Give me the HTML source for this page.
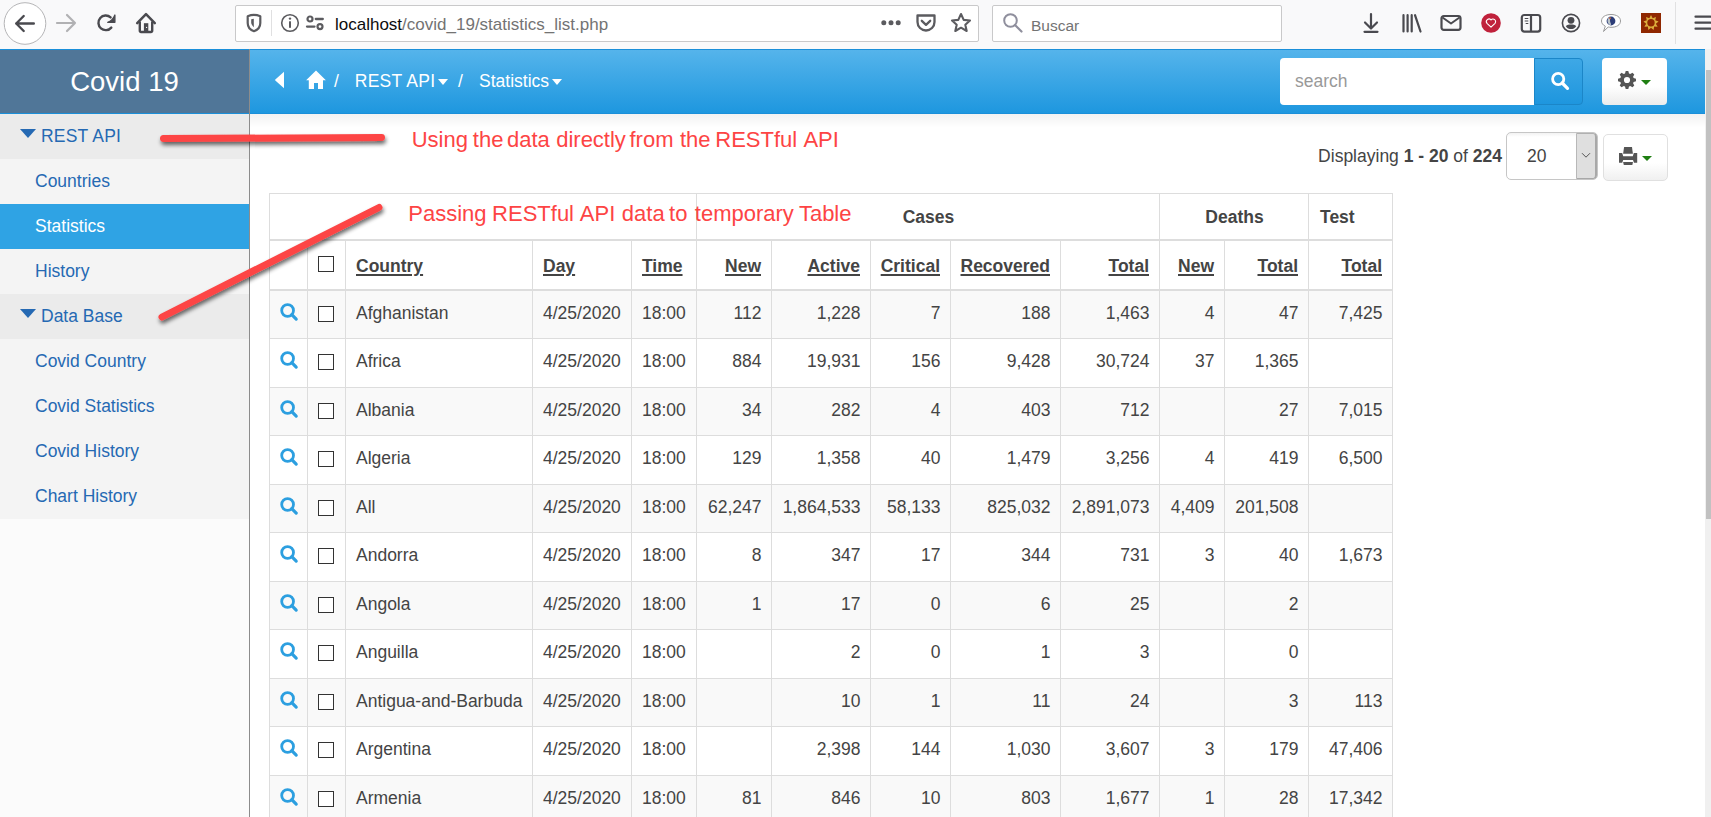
<!DOCTYPE html>
<html><head><meta charset="utf-8"><style>
html,body{margin:0;padding:0;width:1711px;height:817px;overflow:hidden;background:#fff;font-family:"Liberation Sans", sans-serif}
.t{position:absolute;white-space:nowrap;font-family:"Liberation Sans", sans-serif}
.b{position:absolute;display:block}
</style></head><body>
<div class="b" style="left:0px;top:0px;width:1711px;height:49px;background:#f9f9fa"></div>
<svg class="b" style="left:3px;top:2px" width="44" height="44" viewBox="0 0 44 44"><circle cx="22" cy="21.5" r="20.8" fill="#fff" stroke="#b5b5b7" stroke-width="1"/><path d="M13.2 21.5H30.8M20.7 14L13.2 21.5L20.7 29" fill="none" stroke="#4a4a4f" stroke-width="2.4" stroke-linecap="round" stroke-linejoin="round"/></svg>
<svg class="b" style="left:54px;top:12px" width="24" height="22" viewBox="0 0 24 22"><path d="M3 11H21M13 3L21 11L13 19" fill="none" stroke="#b1b1b3" stroke-width="2.2" stroke-linecap="round" stroke-linejoin="round"/></svg>
<svg class="b" style="left:95px;top:12px" width="24" height="22" viewBox="0 0 24 22"><path d="M16.3 15.6A7.3 7.3 0 1 1 15.6 5.4" fill="none" stroke="#4a4a4f" stroke-width="2.4" stroke-linecap="round"/><path d="M19.9 3V10.3H12.7Q17.6 8.6 19.9 3Z" fill="#4a4a4f" stroke="#4a4a4f" stroke-width="1.3" stroke-linejoin="round"/></svg>
<svg class="b" style="left:134px;top:11px" width="24" height="24" viewBox="0 0 24 24"><path d="M3.2 12.2L12 3.2L20.8 12.2" fill="none" stroke="#4a4a4f" stroke-width="2.5" stroke-linecap="round" stroke-linejoin="round"/><path d="M5.8 10.5V19.8A1.2 1.2 0 0 0 7 21H17A1.2 1.2 0 0 0 18.2 19.8V10.5" fill="none" stroke="#4a4a4f" stroke-width="2.4" stroke-linejoin="round"/><rect x="9.9" y="12.2" width="4.4" height="8.2" fill="#4a4a4f"/><circle cx="12.6" cy="16.4" r="0.6" fill="#fff"/></svg>
<div class="b" style="left:235px;top:5px;width:742px;height:35px;background:#fff;border:1px solid #c9c9ca;border-radius:2px"></div>
<svg class="b" style="left:245px;top:13px" width="18" height="20" viewBox="0 0 18 20"><path d="M2.7 3.2Q9 0.7 15.3 3.2V10C15.3 13.8 12.5 17 9 18.2C5.5 17 2.7 13.8 2.7 10Z" fill="none" stroke="#5b5b5f" stroke-width="2.2" stroke-linejoin="round"/><path d="M6.2 6.2L8.8 5.8V14.2C7.2 12.5 6.2 11 6.2 9.5Z" fill="#5b5b5f"/></svg>
<div class="b" style="left:271px;top:10px;width:1px;height:26px;background:#e0e0e1"></div>
<svg class="b" style="left:280px;top:13px" width="20" height="20" viewBox="0 0 20 20"><circle cx="10" cy="10" r="8.3" fill="none" stroke="#5b5b5f" stroke-width="1.6"/><rect x="9" y="8.3" width="2" height="6.5" fill="#5b5b5f"/><circle cx="10" cy="5.6" r="1.2" fill="#5b5b5f"/></svg>
<svg class="b" style="left:305px;top:14px" width="20" height="18" viewBox="0 0 20 18"><circle cx="5" cy="5" r="2.5" fill="none" stroke="#5b5b5f" stroke-width="2.2"/><path d="M10.8 5H17.8M2 12.6H9.5" stroke="#5b5b5f" stroke-width="2.3" stroke-linecap="round"/><circle cx="15" cy="12.6" r="2.5" fill="none" stroke="#5b5b5f" stroke-width="2.2"/></svg>
<div class="t" style="left:335px;top:13px;font-size:17px;line-height:24px;color:#0c0c0d">localhost<span style="color:#737373">/covid_19/statistics_list.php</span></div>
<svg class="b" style="left:880px;top:19px" width="22" height="8" viewBox="0 0 22 8"><circle cx="3.8" cy="3.8" r="2.5" fill="#5b5b5f"/><circle cx="11" cy="3.8" r="2.5" fill="#5b5b5f"/><circle cx="18.2" cy="3.8" r="2.5" fill="#5b5b5f"/></svg>
<svg class="b" style="left:915px;top:13px" width="22" height="20" viewBox="0 0 22 20"><path d="M2.5 2.5H19.5V9A8.5 8.5 0 0 1 2.5 9Z" fill="none" stroke="#5b5b5f" stroke-width="2.3" stroke-linejoin="round"/><path d="M6.8 7.8L11 11.8L15.2 7.8" fill="none" stroke="#5b5b5f" stroke-width="2.3" stroke-linecap="round" stroke-linejoin="round"/></svg>
<svg class="b" style="left:950px;top:12px" width="22" height="22" viewBox="0 0 22 22"><path d="M11 2L13.7 7.9L20 8.5L15.3 12.7L16.7 19L11 15.7L5.3 19L6.7 12.7L2 8.5L8.3 7.9Z" fill="none" stroke="#5b5b5f" stroke-width="2.1" stroke-linejoin="round"/></svg>
<div class="b" style="left:992px;top:5px;width:288px;height:35px;background:#fff;border:1px solid #c9c9ca;border-radius:2px"></div>
<svg class="b" style="left:1002px;top:12px" width="22" height="22" viewBox="0 0 22 22"><circle cx="8.5" cy="8.5" r="6.3" fill="none" stroke="#8f8f9d" stroke-width="2"/><path d="M13 13L19.5 19.5" stroke="#8f8f9d" stroke-width="2.2" stroke-linecap="round"/></svg>
<div class="t" style="left:1031px;top:14.5px;font-size:15.5px;line-height:22px;color:#737373">Buscar</div>
<svg class="b" style="left:1361px;top:12px" width="20" height="22" viewBox="0 0 20 22"><path d="M10 2V16M4 10.5L10 16.5L16 10.5" fill="none" stroke="#4a4a4f" stroke-width="2.2" stroke-linecap="round" stroke-linejoin="round"/><path d="M3.5 19.8H16.5" stroke="#4a4a4f" stroke-width="2.2" stroke-linecap="round"/></svg>
<svg class="b" style="left:1400px;top:12px" width="24" height="22" viewBox="0 0 24 22"><path d="M3.5 3.2V19.5M7.6 3.2V19.5M11.7 3.2V19.5M15 3.2L20.5 19.5" fill="none" stroke="#4a4a4f" stroke-width="2.2" stroke-linecap="round"/></svg>
<svg class="b" style="left:1439px;top:13px" width="24" height="20" viewBox="0 0 24 20"><rect x="2.5" y="3" width="19" height="13.8" rx="2.3" fill="none" stroke="#4a4a4f" stroke-width="2.2"/><path d="M3.5 4.5L12 10.5L20.5 4.5" fill="none" stroke="#4a4a4f" stroke-width="2" stroke-linejoin="round"/></svg>
<svg class="b" style="left:1480px;top:12px" width="22" height="22" viewBox="0 0 22 22"><circle cx="11" cy="11" r="9.8" fill="#c0213b"/><path d="M11 15.2L7 11.3A2.3 2.3 0 0 1 11 8A2.3 2.3 0 0 1 15 11.3Z" fill="none" stroke="#fff" stroke-width="1.1" stroke-linejoin="round"/></svg>
<svg class="b" style="left:1519px;top:12px" width="24" height="22" viewBox="0 0 24 22"><rect x="2.8" y="3" width="18.4" height="16.6" rx="2.5" fill="none" stroke="#4a4a4f" stroke-width="2.2"/><path d="M12 3V19.6" stroke="#4a4a4f" stroke-width="2.2"/><path d="M5.7 6.5H9.3M5.7 9H9.3M6.7 11.5H9.3" stroke="#4a4a4f" stroke-width="1.2"/></svg>
<svg class="b" style="left:1560px;top:12px" width="22" height="22" viewBox="0 0 22 22"><circle cx="11" cy="11" r="8.6" fill="none" stroke="#4a4a4f" stroke-width="1.6"/><circle cx="11" cy="8.3" r="3.4" fill="#4a4a4f"/><path d="M5.8 14.2C7 12.8 9 12.6 11 12.6C13 12.6 15 12.8 16.2 14.2C15 16.2 13 17 11 17C9 17 7 16.2 5.8 14.2Z" fill="#4a4a4f"/></svg>
<svg class="b" style="left:1599px;top:12px" width="24" height="22" viewBox="0 0 24 22"><path d="M12 2.5C17.5 2.5 21.5 5 21.5 9C21.5 13 17.5 15.3 12 15.3C11 15.3 10 15.2 9.2 15L4.5 19.5L6.3 14.2C3.8 13 2.5 11 2.5 9C2.5 5 6.5 2.5 12 2.5Z" fill="#fff" stroke="#9a9a9a" stroke-width="1"/><circle cx="12" cy="9" r="4.4" fill="#2d3d78"/><path d="M10.2 5.2C11.5 6.5 10.8 8.5 11.2 10C11.8 11.5 12.5 12.5 11.5 13.4C10 12.8 8.6 11.2 8.5 9C8.6 7.2 9.2 6 10.2 5.2Z" fill="#b9c2c8"/><circle cx="11" cy="6.2" r="1" fill="#c86a40"/></svg>
<svg class="b" style="left:1641px;top:13px" width="20" height="20" viewBox="0 0 20 20"><rect x="0" y="0" width="20" height="20" fill="#8f2700"/><path d="M10.00 2.10 L11.68 5.20 L14.95 3.90 L14.24 7.35 L17.58 8.46 L14.83 10.65 L16.67 13.65 L13.15 13.55 L12.63 17.04 L10.00 14.70 L7.37 17.04 L6.85 13.55 L3.33 13.65 L5.17 10.65 L2.42 8.46 L5.76 7.35 L5.05 3.90 L8.32 5.20Z" fill="#dcae3c"/><circle cx="10" cy="9.8" r="3.7" fill="#8f2700"/></svg>
<div class="b" style="left:1675px;top:2px;width:1px;height:42px;background:#e1e1e2"></div>
<svg class="b" style="left:1693px;top:14px" width="18" height="18" viewBox="0 0 18 18"><path d="M2.5 2.7H17.5M2.5 8.7H17.5M2.5 14.7H17.5" stroke="#4a4a4f" stroke-width="2.2" stroke-linecap="round"/></svg>
<div class="b" style="left:0px;top:49px;width:1705px;height:1px;background:#1a8fd9"></div>
<div class="b" style="left:0px;top:113px;width:1705px;height:1px;background:#1a8fd9"></div>
<div class="b" style="left:0px;top:50px;width:249px;height:63px;background:#507698"></div>
<div class="b" style="left:250px;top:50px;width:1455px;height:63px;background:linear-gradient(#55b4eb,#1e97df)"></div>
<div class="b" style="left:250px;top:114px;width:1455px;height:14px;background:linear-gradient(rgba(0,0,0,0.05),rgba(0,0,0,0))"></div>
<div class="t" style="left:4.5px;width:240px;text-align:center;top:64.37px;font-size:27.5px;line-height:36px;color:#fff;font-weight:400;">Covid 19</div>
<svg class="b" style="left:274px;top:71px" width="11" height="18" viewBox="0 0 11 18"><path d="M10 0.8V17.2L0.8 9Z" fill="#fff"/></svg>
<svg class="b" style="left:305px;top:70px" width="22" height="20" viewBox="0 0 22 20"><path d="M11 0.5L1.1 10.3H3.8V19.1H9V13H13V19.1H18V10.3H20.9Z" fill="#fff"/></svg>
<div class="t" style="left:334px;top:70.04px;font-size:17.5px;line-height:23px;color:#fff;font-weight:400;">/</div>
<div class="t" style="left:354.8px;top:70.04px;font-size:17.5px;line-height:23px;color:#fff;font-weight:400;letter-spacing:0.25px">REST API</div>
<svg class="b" style="left:438px;top:79px" width="10" height="6" viewBox="0 0 10 6"><path d="M0 0H10L5 6Z" fill="#fff"/></svg>
<div class="t" style="left:458px;top:70.04px;font-size:17.5px;line-height:23px;color:#fff;font-weight:400;">/</div>
<div class="t" style="left:479px;top:70.04px;font-size:17.5px;line-height:23px;color:#fff;font-weight:400;">Statistics</div>
<svg class="b" style="left:552px;top:79px" width="10" height="6" viewBox="0 0 10 6"><path d="M0 0H10L5 6Z" fill="#fff"/></svg>
<div class="b" style="left:1280px;top:58px;width:254px;height:47px;background:#fff;border-radius:4px 0 0 4px"></div>
<div class="t" style="left:1295px;top:70.04px;font-size:17.5px;line-height:23px;color:#999;font-weight:400;">search</div>
<div class="b" style="left:1534px;top:58px;width:49px;height:47px;background:linear-gradient(#3ea8e6,#1e96de);border:1px solid #1b86c8;box-sizing:border-box;border-radius:0 4px 4px 0"></div>
<svg class="b" style="left:1549.5px;top:70.5px" width="22" height="20" viewBox="0 0 22 20"><circle cx="8.2" cy="8" r="5.6" fill="none" stroke="#fff" stroke-width="2.8"/><path d="M12.2 12L17.5 17.3" stroke="#fff" stroke-width="3.2" stroke-linecap="round"/></svg>
<div class="b" style="left:1602px;top:58px;width:65px;height:47px;background:linear-gradient(#fff 60%,#ececec);border-radius:4px"></div>
<svg class="b" style="left:1618px;top:71px" width="18" height="18" viewBox="0 0 18 18"><path fill-rule="evenodd" d="M7.00 2.40 L7.70 0.00 L10.30 0.00 L11.00 2.40 L12.25 2.92 L14.44 1.72 L16.28 3.56 L15.08 5.75 L15.60 7.00 L18.00 7.70 L18.00 10.30 L15.60 11.00 L15.08 12.25 L16.28 14.44 L14.44 16.28 L12.25 15.08 L11.00 15.60 L10.30 18.00 L7.70 18.00 L7.00 15.60 L5.75 15.08 L3.56 16.28 L1.72 14.44 L2.92 12.25 L2.40 11.00 L0.00 10.30 L0.00 7.70 L2.40 7.00 L2.92 5.75 L1.72 3.56 L3.56 1.72 L5.75 2.92Z M9 5.9A3.1 3.1 0 1 0 9 12.1A3.1 3.1 0 1 0 9 5.9Z" fill="#555"/></svg>
<svg class="b" style="left:1641px;top:80px" width="10" height="5" viewBox="0 0 10 5"><path d="M0 0H10L5 5Z" fill="#1f7f12"/></svg>
<div class="b" style="left:0px;top:114px;width:249px;height:405px;background:#f4f4f4"></div>
<div class="b" style="left:0px;top:519px;width:249px;height:298px;background:#fbfbfb"></div>
<div class="b" style="left:0px;top:114px;width:249px;height:45px;background:#ebebeb"></div>
<div class="b" style="left:0px;top:294px;width:249px;height:45px;background:#ebebeb"></div>
<div class="b" style="left:0px;top:204px;width:249px;height:45px;background:#2fa3e4"></div>
<svg class="b" style="left:20px;top:129px" width="16" height="9" viewBox="0 0 16 9"><path d="M0 0H16L8 9Z" fill="#2569b3"/></svg>
<svg class="b" style="left:20px;top:309px" width="16" height="9" viewBox="0 0 16 9"><path d="M0 0H16L8 9Z" fill="#2569b3"/></svg>
<div class="t" style="left:41px;top:124.84px;font-size:17.5px;line-height:23px;color:#2569b3;font-weight:400;letter-spacing:0.2px">REST API</div>
<div class="t" style="left:41px;top:305.04px;font-size:17.5px;line-height:23px;color:#2569b3;font-weight:400;">Data Base</div>
<div class="t" style="left:35px;top:170.04px;font-size:17.5px;line-height:23px;color:#2569b3;font-weight:400;">Countries</div>
<div class="t" style="left:35px;top:215.04px;font-size:17.5px;line-height:23px;color:#fff;font-weight:400;">Statistics</div>
<div class="t" style="left:35px;top:260.04px;font-size:17.5px;line-height:23px;color:#2569b3;font-weight:400;">History</div>
<div class="t" style="left:35px;top:350.04px;font-size:17.5px;line-height:23px;color:#2569b3;font-weight:400;">Covid Country</div>
<div class="t" style="left:35px;top:395.04px;font-size:17.5px;line-height:23px;color:#2569b3;font-weight:400;">Covid Statistics</div>
<div class="t" style="left:35px;top:440.04px;font-size:17.5px;line-height:23px;color:#2569b3;font-weight:400;">Covid History</div>
<div class="t" style="left:35px;top:485.04px;font-size:17.5px;line-height:23px;color:#2569b3;font-weight:400;">Chart History</div>
<div class="b" style="left:249px;top:49px;width:1px;height:768px;background:#8c8c8c"></div>
<div class="b" style="left:1705px;top:49px;width:6px;height:768px;background:#f0f0f0"></div>
<div class="b" style="left:1706px;top:70px;width:5px;height:449px;background:#c1c1c1"></div>
<div class="t" style="left:1200px;width:302px;text-align:right;top:144.8px;font-size:17.5px;line-height:23px;color:#444444">Displaying <b>1 - 20</b> of <b>224</b></div>
<div class="b" style="left:1506px;top:132px;width:92px;height:48px;background:linear-gradient(#f2f2f2,#fff 4px);border:1px solid #c6c6c6;border-radius:5px;box-sizing:border-box"></div>
<div class="b" style="left:1576px;top:133px;width:21px;height:46px;background:#dfdfdf;border-left:1px solid #b8b8b8;border-right:2px solid #a8a8a8;border-bottom:1px solid #a8a8a8;border-top:1px solid #b0b0b0;box-sizing:border-box;border-radius:0 4px 4px 0"></div>
<div class="t" style="left:1527px;top:144.94px;font-size:17.5px;line-height:23px;color:#444444;font-weight:400;">20</div>
<svg class="b" style="left:1581px;top:152px" width="10" height="7" viewBox="0 0 10 7"><path d="M1 1.2L5 5.2L9 1.2" fill="none" stroke="#555" stroke-width="1"/></svg>
<div class="b" style="left:1603px;top:134px;width:65px;height:47px;background:linear-gradient(#fff 62%,#f0f0f0);border:1px solid #e0e0e0;border-radius:5px;box-sizing:border-box"></div>
<svg class="b" style="left:1619px;top:147px" width="19" height="18" viewBox="0 0 19 18"><path d="M5.1 0H13L13.9 6.8H4.1Z" fill="#555"/><path d="M0 6H3.2L4.2 9.2H13.8L14.8 6H18.2V15.8H15L14 13H4.2L3.2 15.8H0Z" fill="#555"/><path d="M4.1 15H14L13.3 18H4.8Z" fill="#555"/></svg>
<svg class="b" style="left:1642px;top:156px" width="10" height="5" viewBox="0 0 10 5"><path d="M0 0H10L5 5Z" fill="#1f7f12"/></svg>
<div class="b" style="left:269px;top:291px;width:1123px;height:47px;background:#f9f9f9"></div>
<div class="b" style="left:269px;top:388px;width:1123px;height:47px;background:#f9f9f9"></div>
<div class="b" style="left:269px;top:485px;width:1123px;height:47px;background:#f9f9f9"></div>
<div class="b" style="left:269px;top:582px;width:1123px;height:47px;background:#f9f9f9"></div>
<div class="b" style="left:269px;top:679px;width:1123px;height:47px;background:#f9f9f9"></div>
<div class="b" style="left:269px;top:776px;width:1123px;height:48px;background:#f9f9f9"></div>
<div class="b" style="left:269px;top:193px;width:1124px;height:1px;background:#dddddd"></div>
<div class="b" style="left:269px;top:239px;width:1124px;height:2px;background:#dddddd"></div>
<div class="b" style="left:269px;top:289px;width:1124px;height:2px;background:#dddddd"></div>
<div class="b" style="left:269px;top:338px;width:1124px;height:1px;background:#dddddd"></div>
<div class="b" style="left:269px;top:387px;width:1124px;height:1px;background:#dddddd"></div>
<div class="b" style="left:269px;top:435px;width:1124px;height:1px;background:#dddddd"></div>
<div class="b" style="left:269px;top:484px;width:1124px;height:1px;background:#dddddd"></div>
<div class="b" style="left:269px;top:532px;width:1124px;height:1px;background:#dddddd"></div>
<div class="b" style="left:269px;top:581px;width:1124px;height:1px;background:#dddddd"></div>
<div class="b" style="left:269px;top:629px;width:1124px;height:1px;background:#dddddd"></div>
<div class="b" style="left:269px;top:678px;width:1124px;height:1px;background:#dddddd"></div>
<div class="b" style="left:269px;top:726px;width:1124px;height:1px;background:#dddddd"></div>
<div class="b" style="left:269px;top:775px;width:1124px;height:1px;background:#dddddd"></div>
<div class="b" style="left:269px;top:824px;width:1124px;height:1px;background:#dddddd"></div>
<div class="b" style="left:269px;top:193px;width:1px;height:624px;background:#dddddd"></div>
<div class="b" style="left:696px;top:193px;width:1px;height:624px;background:#dddddd"></div>
<div class="b" style="left:1159px;top:193px;width:1px;height:624px;background:#dddddd"></div>
<div class="b" style="left:1308px;top:193px;width:1px;height:624px;background:#dddddd"></div>
<div class="b" style="left:1392px;top:193px;width:1px;height:624px;background:#dddddd"></div>
<div class="b" style="left:307px;top:241px;width:1px;height:576px;background:#dddddd"></div>
<div class="b" style="left:345px;top:241px;width:1px;height:576px;background:#dddddd"></div>
<div class="b" style="left:532px;top:241px;width:1px;height:576px;background:#dddddd"></div>
<div class="b" style="left:631px;top:241px;width:1px;height:576px;background:#dddddd"></div>
<div class="b" style="left:771px;top:241px;width:1px;height:576px;background:#dddddd"></div>
<div class="b" style="left:870px;top:241px;width:1px;height:576px;background:#dddddd"></div>
<div class="b" style="left:950px;top:241px;width:1px;height:576px;background:#dddddd"></div>
<div class="b" style="left:1060px;top:241px;width:1px;height:576px;background:#dddddd"></div>
<div class="b" style="left:1224px;top:241px;width:1px;height:576px;background:#dddddd"></div>
<div class="t" style="left:828.5px;width:200px;text-align:center;top:206.24px;font-size:17.5px;line-height:23px;color:#444444;font-weight:700;">Cases</div>
<div class="t" style="left:1164.5px;width:140px;text-align:center;top:206.24px;font-size:17.5px;line-height:23px;color:#444444;font-weight:700;">Deaths</div>
<div class="t" style="left:1320px;top:206.24px;font-size:17.5px;line-height:23px;color:#444444;font-weight:700;">Test</div>
<div class="b" style="left:318px;top:256px;width:16px;height:16px;border:1.3px solid #333;box-sizing:border-box;background:#fff"></div>
<div class="t" style="left:356px;top:255.34px;font-size:17.5px;line-height:23px;color:#444444;font-weight:700;text-decoration:underline;text-decoration-thickness:1.5px;text-underline-offset:2px">Country</div>
<div class="t" style="left:543px;top:255.34px;font-size:17.5px;line-height:23px;color:#444444;font-weight:700;text-decoration:underline;text-decoration-thickness:1.5px;text-underline-offset:2px">Day</div>
<div class="t" style="left:642px;top:255.34px;font-size:17.5px;line-height:23px;color:#444444;font-weight:700;text-decoration:underline;text-decoration-thickness:1.5px;text-underline-offset:2px">Time</div>
<div class="t" style="left:611px;width:150px;text-align:right;top:255.34px;font-size:17.5px;line-height:23px;color:#444444;font-weight:700;text-decoration:underline;text-decoration-thickness:1.5px;text-underline-offset:2px">New</div>
<div class="t" style="left:710px;width:150px;text-align:right;top:255.34px;font-size:17.5px;line-height:23px;color:#444444;font-weight:700;text-decoration:underline;text-decoration-thickness:1.5px;text-underline-offset:2px">Active</div>
<div class="t" style="left:790px;width:150px;text-align:right;top:255.34px;font-size:17.5px;line-height:23px;color:#444444;font-weight:700;text-decoration:underline;text-decoration-thickness:1.5px;text-underline-offset:2px">Critical</div>
<div class="t" style="left:900px;width:150px;text-align:right;top:255.34px;font-size:17.5px;line-height:23px;color:#444444;font-weight:700;text-decoration:underline;text-decoration-thickness:1.5px;text-underline-offset:2px">Recovered</div>
<div class="t" style="left:999px;width:150px;text-align:right;top:255.34px;font-size:17.5px;line-height:23px;color:#444444;font-weight:700;text-decoration:underline;text-decoration-thickness:1.5px;text-underline-offset:2px">Total</div>
<div class="t" style="left:1064px;width:150px;text-align:right;top:255.34px;font-size:17.5px;line-height:23px;color:#444444;font-weight:700;text-decoration:underline;text-decoration-thickness:1.5px;text-underline-offset:2px">New</div>
<div class="t" style="left:1148px;width:150px;text-align:right;top:255.34px;font-size:17.5px;line-height:23px;color:#444444;font-weight:700;text-decoration:underline;text-decoration-thickness:1.5px;text-underline-offset:2px">Total</div>
<div class="t" style="left:1232px;width:150px;text-align:right;top:255.34px;font-size:17.5px;line-height:23px;color:#444444;font-weight:700;text-decoration:underline;text-decoration-thickness:1.5px;text-underline-offset:2px">Total</div>
<svg class="b" style="left:280px;top:303px" width="19" height="19" viewBox="0 0 19 19"><circle cx="7.6" cy="7.5" r="5.9" fill="none" stroke="#2c9fe0" stroke-width="2.8"/><path d="M11.8 11.7L16.2 16.1" stroke="#2c9fe0" stroke-width="3.2" stroke-linecap="round"/></svg>
<div class="b" style="left:318px;top:306px;width:16px;height:16px;border:1.3px solid #333;box-sizing:border-box;background:#fff"></div>
<div class="t" style="left:356px;top:301.74px;font-size:17.5px;line-height:23px;color:#444444;font-weight:400;">Afghanistan</div>
<div class="t" style="left:543px;top:301.74px;font-size:17.5px;line-height:23px;color:#444444;font-weight:400;">4/25/2020</div>
<div class="t" style="left:642px;top:301.74px;font-size:17.5px;line-height:23px;color:#444444;font-weight:400;">18:00</div>
<div class="t" style="left:611.5px;width:150px;text-align:right;top:301.74px;font-size:17.5px;line-height:23px;color:#444444;font-weight:400;">112</div>
<div class="t" style="left:710.5px;width:150px;text-align:right;top:301.74px;font-size:17.5px;line-height:23px;color:#444444;font-weight:400;">1,228</div>
<div class="t" style="left:790.5px;width:150px;text-align:right;top:301.74px;font-size:17.5px;line-height:23px;color:#444444;font-weight:400;">7</div>
<div class="t" style="left:900.5px;width:150px;text-align:right;top:301.74px;font-size:17.5px;line-height:23px;color:#444444;font-weight:400;">188</div>
<div class="t" style="left:999.5px;width:150px;text-align:right;top:301.74px;font-size:17.5px;line-height:23px;color:#444444;font-weight:400;">1,463</div>
<div class="t" style="left:1064.5px;width:150px;text-align:right;top:301.74px;font-size:17.5px;line-height:23px;color:#444444;font-weight:400;">4</div>
<div class="t" style="left:1148.5px;width:150px;text-align:right;top:301.74px;font-size:17.5px;line-height:23px;color:#444444;font-weight:400;">47</div>
<div class="t" style="left:1232.5px;width:150px;text-align:right;top:301.74px;font-size:17.5px;line-height:23px;color:#444444;font-weight:400;">7,425</div>
<svg class="b" style="left:280px;top:351px" width="19" height="19" viewBox="0 0 19 19"><circle cx="7.6" cy="7.5" r="5.9" fill="none" stroke="#2c9fe0" stroke-width="2.8"/><path d="M11.8 11.7L16.2 16.1" stroke="#2c9fe0" stroke-width="3.2" stroke-linecap="round"/></svg>
<div class="b" style="left:318px;top:354px;width:16px;height:16px;border:1.3px solid #333;box-sizing:border-box;background:#fff"></div>
<div class="t" style="left:356px;top:349.74px;font-size:17.5px;line-height:23px;color:#444444;font-weight:400;">Africa</div>
<div class="t" style="left:543px;top:349.74px;font-size:17.5px;line-height:23px;color:#444444;font-weight:400;">4/25/2020</div>
<div class="t" style="left:642px;top:349.74px;font-size:17.5px;line-height:23px;color:#444444;font-weight:400;">18:00</div>
<div class="t" style="left:611.5px;width:150px;text-align:right;top:349.74px;font-size:17.5px;line-height:23px;color:#444444;font-weight:400;">884</div>
<div class="t" style="left:710.5px;width:150px;text-align:right;top:349.74px;font-size:17.5px;line-height:23px;color:#444444;font-weight:400;">19,931</div>
<div class="t" style="left:790.5px;width:150px;text-align:right;top:349.74px;font-size:17.5px;line-height:23px;color:#444444;font-weight:400;">156</div>
<div class="t" style="left:900.5px;width:150px;text-align:right;top:349.74px;font-size:17.5px;line-height:23px;color:#444444;font-weight:400;">9,428</div>
<div class="t" style="left:999.5px;width:150px;text-align:right;top:349.74px;font-size:17.5px;line-height:23px;color:#444444;font-weight:400;">30,724</div>
<div class="t" style="left:1064.5px;width:150px;text-align:right;top:349.74px;font-size:17.5px;line-height:23px;color:#444444;font-weight:400;">37</div>
<div class="t" style="left:1148.5px;width:150px;text-align:right;top:349.74px;font-size:17.5px;line-height:23px;color:#444444;font-weight:400;">1,365</div>
<svg class="b" style="left:280px;top:400px" width="19" height="19" viewBox="0 0 19 19"><circle cx="7.6" cy="7.5" r="5.9" fill="none" stroke="#2c9fe0" stroke-width="2.8"/><path d="M11.8 11.7L16.2 16.1" stroke="#2c9fe0" stroke-width="3.2" stroke-linecap="round"/></svg>
<div class="b" style="left:318px;top:403px;width:16px;height:16px;border:1.3px solid #333;box-sizing:border-box;background:#fff"></div>
<div class="t" style="left:356px;top:398.74px;font-size:17.5px;line-height:23px;color:#444444;font-weight:400;">Albania</div>
<div class="t" style="left:543px;top:398.74px;font-size:17.5px;line-height:23px;color:#444444;font-weight:400;">4/25/2020</div>
<div class="t" style="left:642px;top:398.74px;font-size:17.5px;line-height:23px;color:#444444;font-weight:400;">18:00</div>
<div class="t" style="left:611.5px;width:150px;text-align:right;top:398.74px;font-size:17.5px;line-height:23px;color:#444444;font-weight:400;">34</div>
<div class="t" style="left:710.5px;width:150px;text-align:right;top:398.74px;font-size:17.5px;line-height:23px;color:#444444;font-weight:400;">282</div>
<div class="t" style="left:790.5px;width:150px;text-align:right;top:398.74px;font-size:17.5px;line-height:23px;color:#444444;font-weight:400;">4</div>
<div class="t" style="left:900.5px;width:150px;text-align:right;top:398.74px;font-size:17.5px;line-height:23px;color:#444444;font-weight:400;">403</div>
<div class="t" style="left:999.5px;width:150px;text-align:right;top:398.74px;font-size:17.5px;line-height:23px;color:#444444;font-weight:400;">712</div>
<div class="t" style="left:1148.5px;width:150px;text-align:right;top:398.74px;font-size:17.5px;line-height:23px;color:#444444;font-weight:400;">27</div>
<div class="t" style="left:1232.5px;width:150px;text-align:right;top:398.74px;font-size:17.5px;line-height:23px;color:#444444;font-weight:400;">7,015</div>
<svg class="b" style="left:280px;top:448px" width="19" height="19" viewBox="0 0 19 19"><circle cx="7.6" cy="7.5" r="5.9" fill="none" stroke="#2c9fe0" stroke-width="2.8"/><path d="M11.8 11.7L16.2 16.1" stroke="#2c9fe0" stroke-width="3.2" stroke-linecap="round"/></svg>
<div class="b" style="left:318px;top:451px;width:16px;height:16px;border:1.3px solid #333;box-sizing:border-box;background:#fff"></div>
<div class="t" style="left:356px;top:446.74px;font-size:17.5px;line-height:23px;color:#444444;font-weight:400;">Algeria</div>
<div class="t" style="left:543px;top:446.74px;font-size:17.5px;line-height:23px;color:#444444;font-weight:400;">4/25/2020</div>
<div class="t" style="left:642px;top:446.74px;font-size:17.5px;line-height:23px;color:#444444;font-weight:400;">18:00</div>
<div class="t" style="left:611.5px;width:150px;text-align:right;top:446.74px;font-size:17.5px;line-height:23px;color:#444444;font-weight:400;">129</div>
<div class="t" style="left:710.5px;width:150px;text-align:right;top:446.74px;font-size:17.5px;line-height:23px;color:#444444;font-weight:400;">1,358</div>
<div class="t" style="left:790.5px;width:150px;text-align:right;top:446.74px;font-size:17.5px;line-height:23px;color:#444444;font-weight:400;">40</div>
<div class="t" style="left:900.5px;width:150px;text-align:right;top:446.74px;font-size:17.5px;line-height:23px;color:#444444;font-weight:400;">1,479</div>
<div class="t" style="left:999.5px;width:150px;text-align:right;top:446.74px;font-size:17.5px;line-height:23px;color:#444444;font-weight:400;">3,256</div>
<div class="t" style="left:1064.5px;width:150px;text-align:right;top:446.74px;font-size:17.5px;line-height:23px;color:#444444;font-weight:400;">4</div>
<div class="t" style="left:1148.5px;width:150px;text-align:right;top:446.74px;font-size:17.5px;line-height:23px;color:#444444;font-weight:400;">419</div>
<div class="t" style="left:1232.5px;width:150px;text-align:right;top:446.74px;font-size:17.5px;line-height:23px;color:#444444;font-weight:400;">6,500</div>
<svg class="b" style="left:280px;top:497px" width="19" height="19" viewBox="0 0 19 19"><circle cx="7.6" cy="7.5" r="5.9" fill="none" stroke="#2c9fe0" stroke-width="2.8"/><path d="M11.8 11.7L16.2 16.1" stroke="#2c9fe0" stroke-width="3.2" stroke-linecap="round"/></svg>
<div class="b" style="left:318px;top:500px;width:16px;height:16px;border:1.3px solid #333;box-sizing:border-box;background:#fff"></div>
<div class="t" style="left:356px;top:495.74px;font-size:17.5px;line-height:23px;color:#444444;font-weight:400;">All</div>
<div class="t" style="left:543px;top:495.74px;font-size:17.5px;line-height:23px;color:#444444;font-weight:400;">4/25/2020</div>
<div class="t" style="left:642px;top:495.74px;font-size:17.5px;line-height:23px;color:#444444;font-weight:400;">18:00</div>
<div class="t" style="left:611.5px;width:150px;text-align:right;top:495.74px;font-size:17.5px;line-height:23px;color:#444444;font-weight:400;">62,247</div>
<div class="t" style="left:710.5px;width:150px;text-align:right;top:495.74px;font-size:17.5px;line-height:23px;color:#444444;font-weight:400;">1,864,533</div>
<div class="t" style="left:790.5px;width:150px;text-align:right;top:495.74px;font-size:17.5px;line-height:23px;color:#444444;font-weight:400;">58,133</div>
<div class="t" style="left:900.5px;width:150px;text-align:right;top:495.74px;font-size:17.5px;line-height:23px;color:#444444;font-weight:400;">825,032</div>
<div class="t" style="left:999.5px;width:150px;text-align:right;top:495.74px;font-size:17.5px;line-height:23px;color:#444444;font-weight:400;">2,891,073</div>
<div class="t" style="left:1064.5px;width:150px;text-align:right;top:495.74px;font-size:17.5px;line-height:23px;color:#444444;font-weight:400;">4,409</div>
<div class="t" style="left:1148.5px;width:150px;text-align:right;top:495.74px;font-size:17.5px;line-height:23px;color:#444444;font-weight:400;">201,508</div>
<svg class="b" style="left:280px;top:545px" width="19" height="19" viewBox="0 0 19 19"><circle cx="7.6" cy="7.5" r="5.9" fill="none" stroke="#2c9fe0" stroke-width="2.8"/><path d="M11.8 11.7L16.2 16.1" stroke="#2c9fe0" stroke-width="3.2" stroke-linecap="round"/></svg>
<div class="b" style="left:318px;top:548px;width:16px;height:16px;border:1.3px solid #333;box-sizing:border-box;background:#fff"></div>
<div class="t" style="left:356px;top:543.74px;font-size:17.5px;line-height:23px;color:#444444;font-weight:400;">Andorra</div>
<div class="t" style="left:543px;top:543.74px;font-size:17.5px;line-height:23px;color:#444444;font-weight:400;">4/25/2020</div>
<div class="t" style="left:642px;top:543.74px;font-size:17.5px;line-height:23px;color:#444444;font-weight:400;">18:00</div>
<div class="t" style="left:611.5px;width:150px;text-align:right;top:543.74px;font-size:17.5px;line-height:23px;color:#444444;font-weight:400;">8</div>
<div class="t" style="left:710.5px;width:150px;text-align:right;top:543.74px;font-size:17.5px;line-height:23px;color:#444444;font-weight:400;">347</div>
<div class="t" style="left:790.5px;width:150px;text-align:right;top:543.74px;font-size:17.5px;line-height:23px;color:#444444;font-weight:400;">17</div>
<div class="t" style="left:900.5px;width:150px;text-align:right;top:543.74px;font-size:17.5px;line-height:23px;color:#444444;font-weight:400;">344</div>
<div class="t" style="left:999.5px;width:150px;text-align:right;top:543.74px;font-size:17.5px;line-height:23px;color:#444444;font-weight:400;">731</div>
<div class="t" style="left:1064.5px;width:150px;text-align:right;top:543.74px;font-size:17.5px;line-height:23px;color:#444444;font-weight:400;">3</div>
<div class="t" style="left:1148.5px;width:150px;text-align:right;top:543.74px;font-size:17.5px;line-height:23px;color:#444444;font-weight:400;">40</div>
<div class="t" style="left:1232.5px;width:150px;text-align:right;top:543.74px;font-size:17.5px;line-height:23px;color:#444444;font-weight:400;">1,673</div>
<svg class="b" style="left:280px;top:594px" width="19" height="19" viewBox="0 0 19 19"><circle cx="7.6" cy="7.5" r="5.9" fill="none" stroke="#2c9fe0" stroke-width="2.8"/><path d="M11.8 11.7L16.2 16.1" stroke="#2c9fe0" stroke-width="3.2" stroke-linecap="round"/></svg>
<div class="b" style="left:318px;top:597px;width:16px;height:16px;border:1.3px solid #333;box-sizing:border-box;background:#fff"></div>
<div class="t" style="left:356px;top:592.74px;font-size:17.5px;line-height:23px;color:#444444;font-weight:400;">Angola</div>
<div class="t" style="left:543px;top:592.74px;font-size:17.5px;line-height:23px;color:#444444;font-weight:400;">4/25/2020</div>
<div class="t" style="left:642px;top:592.74px;font-size:17.5px;line-height:23px;color:#444444;font-weight:400;">18:00</div>
<div class="t" style="left:611.5px;width:150px;text-align:right;top:592.74px;font-size:17.5px;line-height:23px;color:#444444;font-weight:400;">1</div>
<div class="t" style="left:710.5px;width:150px;text-align:right;top:592.74px;font-size:17.5px;line-height:23px;color:#444444;font-weight:400;">17</div>
<div class="t" style="left:790.5px;width:150px;text-align:right;top:592.74px;font-size:17.5px;line-height:23px;color:#444444;font-weight:400;">0</div>
<div class="t" style="left:900.5px;width:150px;text-align:right;top:592.74px;font-size:17.5px;line-height:23px;color:#444444;font-weight:400;">6</div>
<div class="t" style="left:999.5px;width:150px;text-align:right;top:592.74px;font-size:17.5px;line-height:23px;color:#444444;font-weight:400;">25</div>
<div class="t" style="left:1148.5px;width:150px;text-align:right;top:592.74px;font-size:17.5px;line-height:23px;color:#444444;font-weight:400;">2</div>
<svg class="b" style="left:280px;top:642px" width="19" height="19" viewBox="0 0 19 19"><circle cx="7.6" cy="7.5" r="5.9" fill="none" stroke="#2c9fe0" stroke-width="2.8"/><path d="M11.8 11.7L16.2 16.1" stroke="#2c9fe0" stroke-width="3.2" stroke-linecap="round"/></svg>
<div class="b" style="left:318px;top:645px;width:16px;height:16px;border:1.3px solid #333;box-sizing:border-box;background:#fff"></div>
<div class="t" style="left:356px;top:640.74px;font-size:17.5px;line-height:23px;color:#444444;font-weight:400;">Anguilla</div>
<div class="t" style="left:543px;top:640.74px;font-size:17.5px;line-height:23px;color:#444444;font-weight:400;">4/25/2020</div>
<div class="t" style="left:642px;top:640.74px;font-size:17.5px;line-height:23px;color:#444444;font-weight:400;">18:00</div>
<div class="t" style="left:710.5px;width:150px;text-align:right;top:640.74px;font-size:17.5px;line-height:23px;color:#444444;font-weight:400;">2</div>
<div class="t" style="left:790.5px;width:150px;text-align:right;top:640.74px;font-size:17.5px;line-height:23px;color:#444444;font-weight:400;">0</div>
<div class="t" style="left:900.5px;width:150px;text-align:right;top:640.74px;font-size:17.5px;line-height:23px;color:#444444;font-weight:400;">1</div>
<div class="t" style="left:999.5px;width:150px;text-align:right;top:640.74px;font-size:17.5px;line-height:23px;color:#444444;font-weight:400;">3</div>
<div class="t" style="left:1148.5px;width:150px;text-align:right;top:640.74px;font-size:17.5px;line-height:23px;color:#444444;font-weight:400;">0</div>
<svg class="b" style="left:280px;top:691px" width="19" height="19" viewBox="0 0 19 19"><circle cx="7.6" cy="7.5" r="5.9" fill="none" stroke="#2c9fe0" stroke-width="2.8"/><path d="M11.8 11.7L16.2 16.1" stroke="#2c9fe0" stroke-width="3.2" stroke-linecap="round"/></svg>
<div class="b" style="left:318px;top:694px;width:16px;height:16px;border:1.3px solid #333;box-sizing:border-box;background:#fff"></div>
<div class="t" style="left:356px;top:689.74px;font-size:17.5px;line-height:23px;color:#444444;font-weight:400;">Antigua-and-Barbuda</div>
<div class="t" style="left:543px;top:689.74px;font-size:17.5px;line-height:23px;color:#444444;font-weight:400;">4/25/2020</div>
<div class="t" style="left:642px;top:689.74px;font-size:17.5px;line-height:23px;color:#444444;font-weight:400;">18:00</div>
<div class="t" style="left:710.5px;width:150px;text-align:right;top:689.74px;font-size:17.5px;line-height:23px;color:#444444;font-weight:400;">10</div>
<div class="t" style="left:790.5px;width:150px;text-align:right;top:689.74px;font-size:17.5px;line-height:23px;color:#444444;font-weight:400;">1</div>
<div class="t" style="left:900.5px;width:150px;text-align:right;top:689.74px;font-size:17.5px;line-height:23px;color:#444444;font-weight:400;">11</div>
<div class="t" style="left:999.5px;width:150px;text-align:right;top:689.74px;font-size:17.5px;line-height:23px;color:#444444;font-weight:400;">24</div>
<div class="t" style="left:1148.5px;width:150px;text-align:right;top:689.74px;font-size:17.5px;line-height:23px;color:#444444;font-weight:400;">3</div>
<div class="t" style="left:1232.5px;width:150px;text-align:right;top:689.74px;font-size:17.5px;line-height:23px;color:#444444;font-weight:400;">113</div>
<svg class="b" style="left:280px;top:739px" width="19" height="19" viewBox="0 0 19 19"><circle cx="7.6" cy="7.5" r="5.9" fill="none" stroke="#2c9fe0" stroke-width="2.8"/><path d="M11.8 11.7L16.2 16.1" stroke="#2c9fe0" stroke-width="3.2" stroke-linecap="round"/></svg>
<div class="b" style="left:318px;top:742px;width:16px;height:16px;border:1.3px solid #333;box-sizing:border-box;background:#fff"></div>
<div class="t" style="left:356px;top:737.74px;font-size:17.5px;line-height:23px;color:#444444;font-weight:400;">Argentina</div>
<div class="t" style="left:543px;top:737.74px;font-size:17.5px;line-height:23px;color:#444444;font-weight:400;">4/25/2020</div>
<div class="t" style="left:642px;top:737.74px;font-size:17.5px;line-height:23px;color:#444444;font-weight:400;">18:00</div>
<div class="t" style="left:710.5px;width:150px;text-align:right;top:737.74px;font-size:17.5px;line-height:23px;color:#444444;font-weight:400;">2,398</div>
<div class="t" style="left:790.5px;width:150px;text-align:right;top:737.74px;font-size:17.5px;line-height:23px;color:#444444;font-weight:400;">144</div>
<div class="t" style="left:900.5px;width:150px;text-align:right;top:737.74px;font-size:17.5px;line-height:23px;color:#444444;font-weight:400;">1,030</div>
<div class="t" style="left:999.5px;width:150px;text-align:right;top:737.74px;font-size:17.5px;line-height:23px;color:#444444;font-weight:400;">3,607</div>
<div class="t" style="left:1064.5px;width:150px;text-align:right;top:737.74px;font-size:17.5px;line-height:23px;color:#444444;font-weight:400;">3</div>
<div class="t" style="left:1148.5px;width:150px;text-align:right;top:737.74px;font-size:17.5px;line-height:23px;color:#444444;font-weight:400;">179</div>
<div class="t" style="left:1232.5px;width:150px;text-align:right;top:737.74px;font-size:17.5px;line-height:23px;color:#444444;font-weight:400;">47,406</div>
<svg class="b" style="left:280px;top:788px" width="19" height="19" viewBox="0 0 19 19"><circle cx="7.6" cy="7.5" r="5.9" fill="none" stroke="#2c9fe0" stroke-width="2.8"/><path d="M11.8 11.7L16.2 16.1" stroke="#2c9fe0" stroke-width="3.2" stroke-linecap="round"/></svg>
<div class="b" style="left:318px;top:791px;width:16px;height:16px;border:1.3px solid #333;box-sizing:border-box;background:#fff"></div>
<div class="t" style="left:356px;top:786.74px;font-size:17.5px;line-height:23px;color:#444444;font-weight:400;">Armenia</div>
<div class="t" style="left:543px;top:786.74px;font-size:17.5px;line-height:23px;color:#444444;font-weight:400;">4/25/2020</div>
<div class="t" style="left:642px;top:786.74px;font-size:17.5px;line-height:23px;color:#444444;font-weight:400;">18:00</div>
<div class="t" style="left:611.5px;width:150px;text-align:right;top:786.74px;font-size:17.5px;line-height:23px;color:#444444;font-weight:400;">81</div>
<div class="t" style="left:710.5px;width:150px;text-align:right;top:786.74px;font-size:17.5px;line-height:23px;color:#444444;font-weight:400;">846</div>
<div class="t" style="left:790.5px;width:150px;text-align:right;top:786.74px;font-size:17.5px;line-height:23px;color:#444444;font-weight:400;">10</div>
<div class="t" style="left:900.5px;width:150px;text-align:right;top:786.74px;font-size:17.5px;line-height:23px;color:#444444;font-weight:400;">803</div>
<div class="t" style="left:999.5px;width:150px;text-align:right;top:786.74px;font-size:17.5px;line-height:23px;color:#444444;font-weight:400;">1,677</div>
<div class="t" style="left:1064.5px;width:150px;text-align:right;top:786.74px;font-size:17.5px;line-height:23px;color:#444444;font-weight:400;">1</div>
<div class="t" style="left:1148.5px;width:150px;text-align:right;top:786.74px;font-size:17.5px;line-height:23px;color:#444444;font-weight:400;">28</div>
<div class="t" style="left:1232.5px;width:150px;text-align:right;top:786.74px;font-size:17.5px;line-height:23px;color:#444444;font-weight:400;">17,342</div>
<div class="t" style="left:411.7px;top:125.48px;font-size:22px;line-height:29px;color:#fd4444;font-weight:400;">Using</div>
<div class="t" style="left:472.8px;top:125.48px;font-size:22px;line-height:29px;color:#fd4444;font-weight:400;">the</div>
<div class="t" style="left:507.0px;top:125.48px;font-size:22px;line-height:29px;color:#fd4444;font-weight:400;">data</div>
<div class="t" style="left:556.2px;top:125.48px;font-size:22px;line-height:29px;color:#fd4444;font-weight:400;">directly</div>
<div class="t" style="left:629.5px;top:125.48px;font-size:22px;line-height:29px;color:#fd4444;font-weight:400;">from</div>
<div class="t" style="left:679.9px;top:125.48px;font-size:22px;line-height:29px;color:#fd4444;font-weight:400;">the</div>
<div class="t" style="left:715.3px;top:125.48px;font-size:22px;line-height:29px;color:#fd4444;font-weight:400;">RESTful</div>
<div class="t" style="left:803.4px;top:125.48px;font-size:22px;line-height:29px;color:#fd4444;font-weight:400;">API</div>
<div class="t" style="left:408.3px;top:199.48px;font-size:22px;line-height:29px;color:#fd4444;font-weight:400;">Passing</div>
<div class="t" style="left:492.1px;top:199.48px;font-size:22px;line-height:29px;color:#fd4444;font-weight:400;">RESTful</div>
<div class="t" style="left:579.8px;top:199.48px;font-size:22px;line-height:29px;color:#fd4444;font-weight:400;">API</div>
<div class="t" style="left:621.8px;top:199.48px;font-size:22px;line-height:29px;color:#fd4444;font-weight:400;">data</div>
<div class="t" style="left:669.1px;top:199.48px;font-size:22px;line-height:29px;color:#fd4444;font-weight:400;">to</div>
<div class="t" style="left:694.8px;top:199.48px;font-size:22px;line-height:29px;color:#fd4444;font-weight:400;">temporary</div>
<div class="t" style="left:798.9px;top:199.48px;font-size:22px;line-height:29px;color:#fd4444;font-weight:400;">Table</div>
<svg class="b" style="left:0;top:0" width="1711" height="817"><defs><filter id="sh" x="-20%" y="-50%" width="140%" height="200%"><feGaussianBlur in="SourceAlpha" stdDeviation="2"/><feOffset dx="1" dy="3"/><feComponentTransfer><feFuncA type="linear" slope="0.6"/></feComponentTransfer><feMerge><feMergeNode/><feMergeNode in="SourceGraphic"/></feMerge></filter></defs><g filter="url(#sh)" stroke="#fd4444" stroke-width="7" stroke-linecap="round" fill="none"><path d="M163.5 138.6L381.5 137.4"/><path d="M162 317L379 207.5"/></g></svg>
</body></html>
